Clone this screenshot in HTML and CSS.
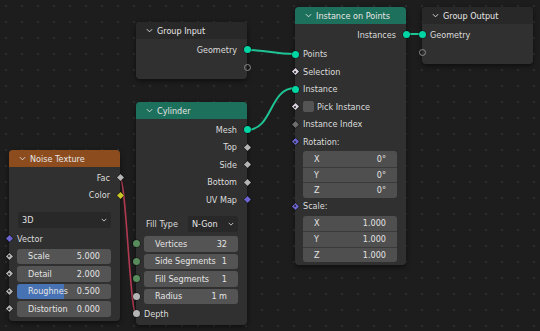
FILE: index.html
```html
<!DOCTYPE html>
<html lang="en">
<head>
    <meta charset="UTF-8">
    <meta name="viewport" content="width=device-width, initial-scale=1.0">
    <title>Geometry Nodes</title>
    <link rel="stylesheet" href="styles.css">
</head>
<body>
    <div class="editor">
        <svg class="links" width="540" height="331" viewBox="0 0 540 331">
            <path class="link" d="M247 50 C271 50 271 54 295 54"/>
            <path class="link" d="M247 130 C273 130 269 88 295 88"/>
            <path class="link" d="M406 34 L422 34"/>
            <path class="link bad" d="M120 178 C126 178 130 314 136 314"/>
        </svg>

        <!-- Group Input -->
        <div class="node group-input">
            <div class="node-header">
                <svg class="chev" viewBox="0 0 8 5"><path d="M1 1 L4 4 L7 1"/></svg>
                Group Input
            </div>
            <div class="node-body">
                <div class="row out"><span>Geometry</span><i class="socket dot geo"></i></div>
                <div class="row out"><i class="socket ring"></i></div>
            </div>
        </div>

        <!-- Cylinder -->
        <div class="node cylinder">
            <div class="node-header geo-head">
                <svg class="chev" viewBox="0 0 8 5"><path d="M1 1 L4 4 L7 1"/></svg>
                Cylinder
            </div>
            <div class="node-body">
                <div class="row out"><span>Mesh</span><i class="socket dot geo"></i></div>
                <div class="row out"><span>Top</span><i class="socket dia flt"></i></div>
                <div class="row out"><span>Side</span><i class="socket dia flt"></i></div>
                <div class="row out"><span>Bottom</span><i class="socket dia flt"></i></div>
                <div class="row out"><span>UV Map</span><i class="socket dia vec"></i></div>

                <div class="row prop fill-type">
                    <span>Fill Type</span>
                    <div class="dropdown small">N-Gon<svg class="chev-s" viewBox="0 0 8 5"><path d="M1 1 L4 4 L7 1"/></svg></div>
                </div>

                <div class="row in field-row first-field"><i class="socket dot int"></i>
                    <div class="num"><span>Vertices</span><span>32</span></div>
                </div>
                <div class="row in field-row"><i class="socket dot int"></i>
                    <div class="num"><span>Side Segments</span><span>1</span></div>
                </div>
                <div class="row in field-row"><i class="socket dot int"></i>
                    <div class="num"><span>Fill Segments</span><span>1</span></div>
                </div>
                <div class="row in field-row"><i class="socket dot flt"></i>
                    <div class="num"><span>Radius</span><span>1 m</span></div>
                </div>
                <div class="row in"><i class="socket dot flt"></i><span>Depth</span></div>
            </div>
        </div>

        <!-- Noise Texture -->
        <div class="node noise">
            <div class="node-header tex-head">
                <svg class="chev" viewBox="0 0 8 5"><path d="M1 1 L4 4 L7 1"/></svg>
                Noise Texture
            </div>
            <div class="node-body">
                <div class="row out"><span>Fac</span><i class="socket dia flt"></i></div>
                <div class="row out"><span>Color</span><i class="socket dia col"></i></div>

                <div class="row prop dim-row">
                    <div class="dropdown wide">3D<svg class="chev-s" viewBox="0 0 8 5"><path d="M1 1 L4 4 L7 1"/></svg></div>
                </div>

                <div class="row in vector-row"><i class="socket dia vec"></i><span>Vector</span></div>
                <div class="row in field-row"><i class="socket dia flt field"></i>
                    <div class="num"><span>Scale</span><span>5.000</span></div>
                </div>
                <div class="row in field-row"><i class="socket dia flt field"></i>
                    <div class="num"><span>Detail</span><span>2.000</span></div>
                </div>
                <div class="row in field-row"><i class="socket dia flt field"></i>
                    <div class="num slider"><span>Roughnes</span><span>0.500</span></div>
                </div>
                <div class="row in field-row"><i class="socket dia flt field"></i>
                    <div class="num"><span>Distortion</span><span>0.000</span></div>
                </div>
            </div>
        </div>

        <!-- Instance on Points -->
        <div class="node instance">
            <div class="node-header geo-head">
                <svg class="chev" viewBox="0 0 8 5"><path d="M1 1 L4 4 L7 1"/></svg>
                Instance on Points
            </div>
            <div class="node-body">
                <div class="row out"><span>Instances</span><i class="socket dot geo"></i></div>
                <div class="row in first-in"><i class="socket dot geo"></i><span>Points</span></div>
                <div class="row in"><i class="socket dia bool field"></i><span>Selection</span></div>
                <div class="row in"><i class="socket dot geo"></i><span>Instance</span></div>
                <div class="row in"><i class="socket dia bool field"></i><span class="check"></span><span>Pick Instance</span></div>
                <div class="row in"><i class="socket dia idx"></i><span>Instance Index</span></div>
                <div class="row in"><i class="socket dia vec field"></i><span>Rotation:</span></div>
                <div class="vector">
                    <div class="vec-item"><span>X</span><span>0°</span></div>
                    <div class="vec-item"><span>Y</span><span>0°</span></div>
                    <div class="vec-item"><span>Z</span><span>0°</span></div>
                </div>
                <div class="row in"><i class="socket dia vec field"></i><span>Scale:</span></div>
                <div class="vector">
                    <div class="vec-item"><span>X</span><span>1.000</span></div>
                    <div class="vec-item"><span>Y</span><span>1.000</span></div>
                    <div class="vec-item"><span>Z</span><span>1.000</span></div>
                </div>
            </div>
        </div>

        <!-- Group Output -->
        <div class="node group-output">
            <div class="node-header">
                <svg class="chev" viewBox="0 0 8 5"><path d="M1 1 L4 4 L7 1"/></svg>
                Group Output
            </div>
            <div class="node-body">
                <div class="row in"><i class="socket dot geo"></i><span>Geometry</span></div>
                <div class="row in"><i class="socket ring"></i></div>
            </div>
        </div>
    </div>
</body>
</html>
```

FILE: styles.css
```css
body {
    margin: 0;
    background: #1d1d1d;
    font-family: "DejaVu Sans", sans-serif;
    font-size: 8.1px;
    color: #dcdcdc;
}

.editor {
    position: relative;
    width: 540px;
    height: 331px;
    overflow: hidden;
    background-color: #1d1d1d;
    background-image: radial-gradient(circle, #2d2d2d 0.9px, transparent 1.3px);
    background-size: 16px 16px;
    background-position: -2px -2px;
}

.links {
    position: absolute;
    top: 0;
    left: 0;
}

.link {
    fill: none;
    stroke: #1fc494;
    stroke-width: 2;
}

.link.bad {
    stroke: #b03a52;
    stroke-width: 1.6;
}

/* nodes sit on a free canvas */
.node {
    position: absolute;
    width: 111px;
    background: #303030;
    border-radius: 4px;
    box-shadow: 0 2px 5px rgba(0, 0, 0, 0.5);
}

.group-input { left: 136px; top: 22px; }
.cylinder { left: 136px; top: 102px; }
.noise { left: 9px; top: 150px; }
.instance { left: 295px; top: 7px; }
.group-output { left: 422px; top: 7px; }

.node-header {
    height: 17px;
    display: flex;
    align-items: center;
    gap: 4px;
    padding-left: 10px;
    border-radius: 4px 4px 0 0;
    background: #282828;
    color: #e6e6e6;
}

.geo-head {
    background: #1d705b;
}

.tex-head {
    background: #8c4c1e;
}

.chev {
    width: 7px;
    height: 5px;
}

.chev path, .chev-s path {
    fill: none;
    stroke: #dedede;
    stroke-width: 1.1;
}

.node-body {
    padding: 2px 0 3px;
}

.cylinder .node-body {
    padding-bottom: 2px;
}

.row {
    position: relative;
    height: 17.5px;
    display: flex;
    align-items: center;
    white-space: nowrap;
}

.row.out {
    justify-content: flex-end;
    padding-right: 10px;
}

.row.in {
    padding-left: 8px;
}

.first-in {
    margin-top: 2px;
}

.fill-type {
    margin-top: 7px;
    padding: 0 9px 0 10px;
}

.first-field {
    margin-top: 2px;
}

.dim-row {
    margin-top: 7px;
    padding: 0 9px 0 10px;
}

.vector-row {
    margin-top: 1.5px;
}

/* sockets */
.socket {
    position: absolute;
    top: 50%;
    width: 8px;
    height: 8px;
    margin-top: -4px;
    display: flex;
    align-items: center;
    justify-content: center;
}

.out .socket { right: -4px; }
.in .socket { left: -4px; }

.dot::before {
    content: "";
    width: 7px;
    height: 7px;
    border-radius: 50%;
    background: var(--c);
    box-shadow: 0 0 0 0.5px rgba(0, 0, 0, 0.6);
}

.dia::before {
    content: "";
    width: 5px;
    height: 5px;
    transform: rotate(45deg);
    background: var(--c);
    box-shadow: 0 0 0 0.5px rgba(0, 0, 0, 0.6);
}

.field::after {
    content: "";
    position: absolute;
    width: 2px;
    height: 2px;
    border-radius: 50%;
    background: #262626;
}

.ring::before {
    content: "";
    width: 5px;
    height: 5px;
    border-radius: 50%;
    border: 1px solid #8a8a8a;
}

.geo { --c: #00d6a3; }
.flt { --c: #b4b4b4; }
.vec { --c: #6a63d0; }
.col { --c: #c7c729; }
.int { --c: #598c5c; }
.bool { --c: #dcd4e0; }
.idx { --c: #6e6e6e; }

/* widgets */
.field-row {
    padding-right: 9px;
}

.num {
    flex: 1;
    height: 15.5px;
    display: flex;
    align-items: center;
    justify-content: space-between;
    padding: 0 11px;
    background: #545454;
    border-radius: 3px;
    color: #e4e4e4;
}

.num.slider {
    background: linear-gradient(to right, #4772b3 50%, #545454 50%);
}

.dropdown {
    height: 16px;
    display: flex;
    align-items: center;
    justify-content: space-between;
    padding: 0 4px;
    box-sizing: border-box;
    background: #282828;
    border-radius: 3px;
    color: #e4e4e4;
}

.dropdown.small {
    width: 50px;
    margin-left: auto;
}

.dropdown.wide {
    width: 93px;
    margin-left: -1px;
}

.chev-s {
    width: 6px;
    height: 4px;
}

.check {
    width: 11px;
    height: 11px;
    margin-right: 3px;
    background: #545454;
    border-radius: 2px;
}

.vector {
    margin: 0.5px 9px 0 8px;
    border-radius: 3px;
    overflow: hidden;
}

.vec-item {
    height: 15.5px;
    box-sizing: border-box;
    display: flex;
    align-items: center;
    justify-content: space-between;
    padding: 0 11px;
    background: #4f4f4f;
    color: #e4e4e4;
}

.vec-item + .vec-item {
    border-top: 1px solid #3a3a3a;
}
```
